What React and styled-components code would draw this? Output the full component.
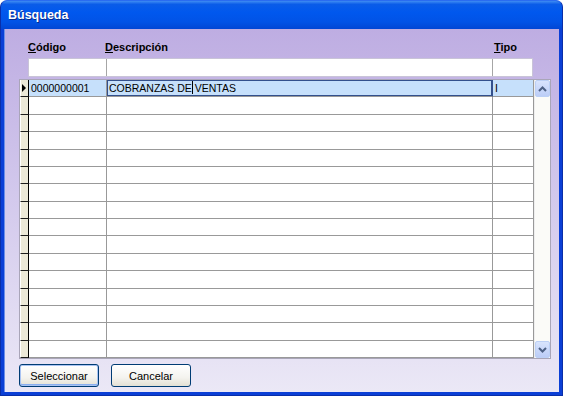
import styled, { createGlobalStyle } from "styled-components";

const GlobalStyle = createGlobalStyle`
  body {
    margin: 0;
    background: #ffffff;
    font-family: "Liberation Sans", Arial, sans-serif;
  }
`;

const Window = styled.div`
  width: 563px;
  height: 396px;
  box-sizing: border-box;
  display: flex;
  flex-direction: column;
  border-radius: 7px 7px 0 0;
  background: #0b3fd6;
  border: 1px solid #0a2ea8;
  border-top-color: #2a6cf0;
  padding: 0 3px 3px;
`;

const TitleBar = styled.div`
  height: 28px;
  display: flex;
  align-items: center;
  padding-left: 7px;
  margin: 0 -3px;
  border-radius: 6px 6px 0 0;
  background: linear-gradient(
    to bottom,
    #3f8cf3 0%,
    #0a5ce8 12%,
    #0058ee 40%,
    #0153e6 75%,
    #0146d4 100%
  );
  color: #ffffff;
  font-family: "Liberation Sans", Arial, sans-serif;
  font-size: 12.5px;
  font-weight: bold;
  text-shadow: 1px 1px 0 #0a2a8a;
`;

const Body = styled.div`
  flex: 1;
  display: flex;
  flex-direction: column;
  padding: 9px 0 0 14px;
  background: linear-gradient(to bottom, #beade2 0%, #d2c8ec 45%, #ebe8f6 100%);
  border-left: 1px solid #6b8fe8;
`;

const LabelRow = styled.div`
  display: grid;
  grid-template-columns: 9px 78px 386px 41px;
  height: 18px;
  align-items: center;
  font-size: 11px;
  font-weight: bold;
  color: #000;
`;

const Label = styled.span`
  grid-column: ${(p) => p.col};
  margin-left: ${(p) => p.shift || 0}px;
  u {
    text-decoration: underline;
  }
`;

const FilterRow = styled.div`
  display: grid;
  grid-template-columns: 78px 386px 41px;
  margin: 2px 0 0 9px;
  width: 505px;
  height: 19px;
  box-sizing: border-box;
  background: #ffffff;
  border: 1px solid #c9c4d8;
`;

const FilterCell = styled.div`
  border-right: ${(p) => (p.last ? "none" : "1px solid #a6a6a6")};
`;

const GridArea = styled.div`
  display: flex;
  margin-top: 2px;
  width: 532px;
  height: 280px;
  box-sizing: border-box;
  border: 1px solid #a9a5b8;
  background: #ffffff;
`;

const Rows = styled.div`
  display: flex;
  flex-direction: column;
`;

const Row = styled.div`
  display: grid;
  grid-template-columns: 9px 78px 386px 41px;
  height: 17.375px;
  background: ${(p) => (p.selected ? "#c6e0fb" : "#ffffff")};
`;

const Indicator = styled.div`
  background: #ece9d8;
  border-right: 1px solid #000;
  border-bottom: 1px solid #1c1c1c;
  border-left: 1px solid #ffffff;
  display: flex;
  align-items: center;
  justify-content: center;
`;

const Cell = styled.div`
  border-right: 1px solid #999999;
  border-bottom: 1px solid #999999;
  font-size: 10.5px;
  line-height: 16px;
  padding-left: 2px;
  white-space: nowrap;
  overflow: hidden;
  color: #000;
  ${(p) =>
    p.focused &&
    `
    box-shadow: inset 0 0 0 1px #33508c;
    border-right-color: #33508c;
  `}
`;

const Caret = styled.span`
  display: inline-block;
  width: 1px;
  height: 13px;
  margin: 0 -1px 0 0;
  background: #000;
  vertical-align: -2px;
`;

const ScrollBar = styled.div`
  width: 17px;
  display: flex;
  flex-direction: column;
  justify-content: space-between;
  background: #fbfbf8;
  border-left: 1px solid #eeeeee;
`;

const ArrowButton = styled.div`
  height: 17px;
  display: flex;
  align-items: center;
  justify-content: center;
  background: linear-gradient(to bottom, #d8e4fd, #bccdf7);
  border: 1px solid #bcd0f5;
  border-radius: 2px;
  box-sizing: border-box;
`;

const ButtonRow = styled.div`
  display: flex;
  gap: 12px;
  margin-top: 5px;
`;

const Button = styled.button`
  width: 80px;
  height: 23px;
  box-sizing: border-box;
  border: 1px solid #003c74;
  border-radius: 3px;
  background: linear-gradient(to bottom, #ffffff 0%, #f4f3ee 60%, #e3e0d4 100%);
  font-family: "Liberation Sans", Arial, sans-serif;
  font-size: 11px;
  color: #000;
  padding: 0;
  box-shadow: ${(p) =>
    p.primary ? "inset 0 0 0 1px #a9c3f2, inset 0 -1px 0 1px #89aef0" : "none"};
`;

const Chevron = ({ up }) => (
  <svg width="9" height="6" viewBox="0 0 9 6">
    <path
      d={up ? "M1 5 L4.5 1.5 L8 5" : "M1 1 L4.5 4.5 L8 1"}
      fill="none"
      stroke="#4d6185"
      strokeWidth="2"
    />
  </svg>
);

const Pointer = () => (
  <svg width="5" height="8" viewBox="0 0 5 8">
    <path d="M0 0 L4 4 L0 8 Z" fill="#000" />
  </svg>
);

export default function App() {
  const rows = Array.from({ length: 16 }, (_, i) => i);

  return (
    <>
      <GlobalStyle />
      <Window>
        <TitleBar>Búsqueda</TitleBar>
        <Body>
          <LabelRow>
            <Label col={2}>
              <u>C</u>ódigo
            </Label>
            <Label col={3} shift={-1}>
              <u>D</u>escripción
            </Label>
            <Label col={4} shift={2}>
              <u>T</u>ipo
            </Label>
          </LabelRow>
          <FilterRow>
            <FilterCell />
            <FilterCell />
            <FilterCell last />
          </FilterRow>
          <GridArea>
            <Rows>
              {rows.map((i) =>
                i === 0 ? (
                  <Row key={i} selected>
                    <Indicator>
                      <Pointer />
                    </Indicator>
                    <Cell>0000000001</Cell>
                    <Cell focused>
                      COBRANZAS DE<Caret /> VENTAS
                    </Cell>
                    <Cell>I</Cell>
                  </Row>
                ) : (
                  <Row key={i}>
                    <Indicator />
                    <Cell />
                    <Cell />
                    <Cell />
                  </Row>
                )
              )}
            </Rows>
            <ScrollBar>
              <ArrowButton>
                <Chevron up />
              </ArrowButton>
              <ArrowButton>
                <Chevron />
              </ArrowButton>
            </ScrollBar>
          </GridArea>
          <ButtonRow>
            <Button primary>Seleccionar</Button>
            <Button>Cancelar</Button>
          </ButtonRow>
        </Body>
      </Window>
    </>
  );
}
